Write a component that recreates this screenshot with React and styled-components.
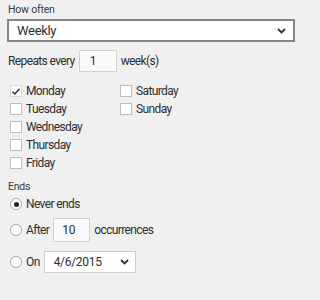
import React from 'react'
import styled, { createGlobalStyle } from 'styled-components'

const GlobalStyle = createGlobalStyle`
  html, body {
    margin: 0;
    background: #f0f0f0;
  }
  * { box-sizing: border-box; }
`

const Panel = styled.div`
  width: 308px;
  height: 300px;
  padding: 3px 13px 0 7px;
  font-family: Roboto, "Open Sans", sans-serif;
  font-size: 12px;
  letter-spacing: -0.62px;
  color: #2e2e2e;
  display: flex;
  flex-direction: column;
`

const Caption = styled.div`
  font-size: 10.5px;
  letter-spacing: -0.2px;
  line-height: 14px;
  padding-left: 1px;
  color: #3a3a3a;
  margin-top: ${(p) => p.$top || 0}px;
`

const Select = styled.div`
  height: ${(p) => (p.$small ? 22 : 23)}px;
  width: ${(p) => (p.$small ? '92px' : '100%')};
  border: ${(p) => (p.$small ? '1px solid #cdcdcd' : '2px solid #858585')};
  background: #fff;
  display: flex;
  align-items: center;
  justify-content: space-between;
  padding: ${(p) => (p.$small ? '0 6px 0 9px' : '0 7px 0 8px')};
  font-size: ${(p) => (p.$small ? 12 : 13)}px;
  letter-spacing: -0.3px;
  margin-top: ${(p) => p.$top || 0}px;
`

const Row = styled.div`
  display: flex;
  align-items: center;
  gap: ${(p) => p.$gap || 4}px;
  height: ${(p) => p.$h || 18}px;
  margin-top: ${(p) => p.$top || 0}px;
  padding-left: ${(p) => p.$pad || 0}px;
`

const NumBox = styled.div`
  width: ${(p) => p.$w}px;
  height: ${(p) => p.$h || 22}px;
  border: 1px solid #d2d2d2;
  background: #fafafa;
  display: flex;
  align-items: center;
  padding-left: ${(p) => p.$pad || 10}px;
  letter-spacing: -0.2px;
`

const Days = styled.div`
  display: grid;
  grid-template-columns: 110px 1fr;
  grid-auto-flow: column;
  grid-template-rows: repeat(5, 18px);
  margin-top: 10px;
  padding-left: 3px;
`

const Box = styled.span`
  width: 12px;
  height: 12px;
  border: 1px solid ${(p) => (p.$checked ? '#dadada' : '#bdbdbd')};
  background: #fff;
  display: inline-flex;
  align-items: center;
  justify-content: center;
`

const Radio = styled.span`
  width: 12px;
  height: 12px;
  border-radius: 50%;
  border: 1px solid #a8a8a8;
  background: #fff;
  display: inline-flex;
  align-items: center;
  justify-content: center;
  &::after {
    content: "";
    width: 5px;
    height: 5px;
    border-radius: 50%;
    background: ${(p) => (p.$checked ? '#222' : 'transparent')};
  }
`

const Chevron = () => (
  <svg width="9" height="6" viewBox="0 0 9 6">
    <path d="M1 1 L4.5 4.5 L8 1" fill="none" stroke="#333" strokeWidth="1.8" />
  </svg>
)

const Check = () => (
  <svg width="10" height="9" viewBox="0 0 10 9">
    <path d="M1.5 4.8 L3.8 7 L8.5 1.8" fill="none" stroke="#333" strokeWidth="1.5" />
  </svg>
)

const days = [
  ['Monday', true],
  ['Tuesday'],
  ['Wednesday'],
  ['Thursday'],
  ['Friday'],
  ['Saturday'],
  ['Sunday'],
]

export default function App() {
  return (
    <>
      <GlobalStyle />
      <Panel>
        <Caption>How often</Caption>
        <Select $top={2}>
          <span>Weekly</span>
          <Chevron />
        </Select>
        <Row $h={22} $top={8} $gap={4} $pad={1}>
          <span>Repeats every</span>
          <NumBox $w={38}>1</NumBox>
          <span>week(s)</span>
        </Row>
        <Days>
          {days.map(([name, checked]) => (
            <Row key={name} $gap={4}>
              <Box $checked={checked}>{checked && <Check />}</Box>
              <span>{name}</span>
            </Row>
          ))}
        </Days>
        <Caption $top={8}>Ends</Caption>
        <Row $top={1} $gap={4} $pad={3}>
          <Radio $checked />
          <span>Never ends</span>
        </Row>
        <Row $h={24} $top={5} $gap={4} $pad={3}>
          <Radio />
          <span>After</span>
          <NumBox $w={37} $h={24} $pad={8}>10</NumBox>
          <span>occurrences</span>
        </Row>
        <Row $h={22} $top={9} $gap={4} $pad={3}>
          <Radio />
          <span>On</span>
          <Select $small>
            <span>4/6/2015</span>
            <Chevron />
          </Select>
        </Row>
      </Panel>
    </>
  )
}
